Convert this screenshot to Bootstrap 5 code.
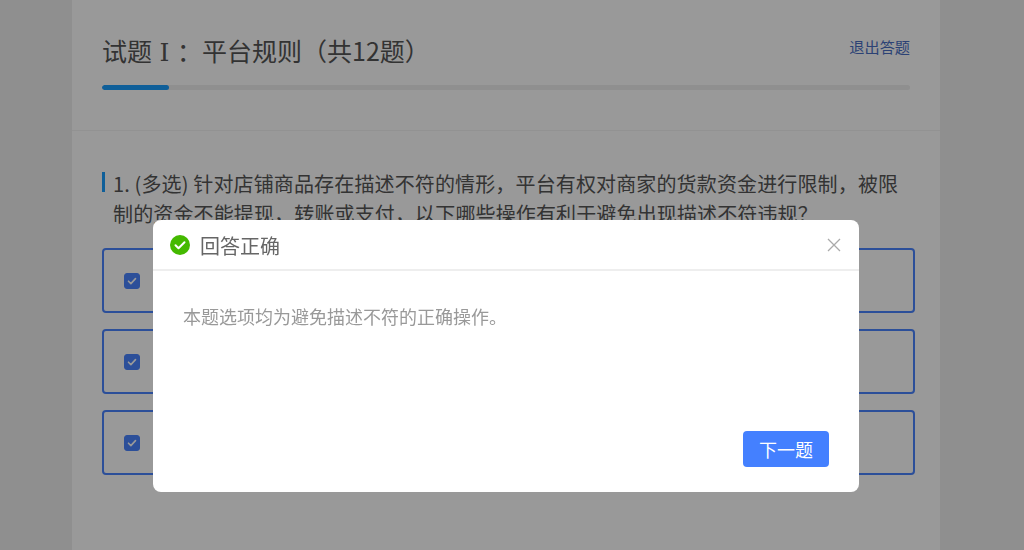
<!DOCTYPE html>
<html lang="zh-CN">
<head>
<meta charset="utf-8">
<title>试题</title>
<link href="https://cdn.jsdelivr.net/npm/bootstrap@5.3.0/dist/css/bootstrap.min.css" rel="stylesheet">
<style>
html, body { height: 100%; overflow: hidden; }
body { background: #eeeeee; font-family: "Noto Sans CJK SC", "Noto Sans", sans-serif; color: #555; }
.exam-panel { width: 868px; min-height: 550px; margin-left: 72px; background: #fff; }
.exam-head { padding: 28px 30px 40px; border-bottom: 1px solid #f3f3f3; height: 131px; }
.exam-top { height: 44px; }
.exam-title { font-size: 25px; line-height: 44px; font-weight: 400; margin: 0; color: #555; }
.exam-num { display: inline-block; width: 25px; line-height: 1; text-align: center; font-family: "Liberation Serif", "DejaVu Serif", serif; }
.exam-quit { font-size: 15.2px; color: #4a6fc4; text-decoration: none; line-height: 36px; }
.exam-progress { height: 5px; background: #eeeeee; border-radius: 3px; margin-top: 13px; }
.exam-progress .progress-bar { background: #1a9fff; border-radius: 3px; }
.exam-body { padding: 40px 25px 0 30px; }
.q-text { font-size: 20px; line-height: 29.5px; letter-spacing: .14px; padding-right: 13px; padding-left: 11px; margin-top: -2px; margin-bottom: 20px; color: #555; position: relative; }
.q-text::before { content: ""; position: absolute; left: 0; top: 3px; width: 3px; height: 20px; background: #1a9fff; }
.opt-box { height: 65px; border: 2px solid #4a84ff; border-radius: 4px; margin-bottom: 16px; padding-left: 20px; }
.opt-box .form-check-input { width: 16px; height: 16px; margin: 0; background-color: #4a84ff; border-color: #4a84ff; border-radius: 3px; background-size: 12px; background-image: url("data:image/svg+xml,%3csvg xmlns='http://www.w3.org/2000/svg' viewBox='0 0 12 12'%3e%3cpath fill='none' stroke='%23fff' stroke-width='1.6' stroke-linecap='round' stroke-linejoin='round' d='M2.5 6.2l2.4 2.4 4.6-5'/%3e%3c/svg%3e"); }
.modal-backdrop.show { opacity: .4; }
.modal-dialog.ans-dialog { max-width: 706px; width: 706px; margin: 220px 0 0 153px; }
.ans-dialog .modal-content { border: 0; border-radius: 8px; height: 272px; font-family: "Noto Sans CJK SC", "Noto Sans", sans-serif; }
.ans-dialog .modal-header { height: 51px; padding: 0 18px 0 17px; border-bottom: 2px solid #eeeeee; border-radius: 8px 8px 0 0; }
.ans-title { font-size: 20px; color: #666; line-height: 1; margin: 2px 0 0 10px; font-weight: 400; }
.ans-close { background: none; border: 0; padding: 0; line-height: 0; }
.ans-dialog .modal-body { padding: 31px 30px 0; font-size: 18px; color: #999; line-height: 28px; flex: 1 1 auto; }
.ans-dialog .modal-footer { border: 0; padding: 0 30px 25px; }
.ans-next { width: 86px; height: 36px; margin: 0; padding: 0; background: #4480ff; border: 0; border-radius: 4px; color: #fff; font-size: 18px; line-height: 36px; }
</style>
</head>
<body>
<div class="exam-panel">
  <div class="exam-head">
    <div class="exam-top d-flex justify-content-between align-items-start">
      <h1 class="exam-title">试题<span class="exam-num">Ⅰ</span>：平台规则（共12题）</h1>
      <a class="exam-quit" href="#">退出答题</a>
    </div>
    <div class="progress exam-progress">
      <div class="progress-bar" role="progressbar" style="width: 8.33%"></div>
    </div>
  </div>
  <div class="exam-body">
    <div class="q-text">1. (多选) 针对店铺商品存在描述不符的情形，平台有权对商家的货款资金进行限制，被限制的资金不能提现，转账或支付，以下哪些操作有利于避免出现描述不符违规？</div>
    <div class="opt-box d-flex align-items-center"><input class="form-check-input" type="checkbox" checked aria-label="选项A"></div>
    <div class="opt-box d-flex align-items-center"><input class="form-check-input" type="checkbox" checked aria-label="选项B"></div>
    <div class="opt-box d-flex align-items-center"><input class="form-check-input" type="checkbox" checked aria-label="选项C"></div>
  </div>
</div>
<div class="modal-backdrop show"></div>
<div class="modal d-block" tabindex="-1">
  <div class="modal-dialog ans-dialog">
    <div class="modal-content">
      <div class="modal-header justify-content-start">
        <svg width="20" height="20" viewBox="0 0 20 20" aria-hidden="true"><circle cx="10" cy="10" r="10" fill="#44b900"/><path d="M5.5 10.3l3 3 6-6" fill="none" stroke="#fff" stroke-width="2" stroke-linecap="round" stroke-linejoin="round"/></svg>
        <h5 class="ans-title">回答正确</h5>
        <button type="button" class="ans-close ms-auto" aria-label="关闭"><svg width="14" height="14" viewBox="0 0 14 14" aria-hidden="true"><path d="M1 1l12 12M13 1L1 13" stroke="#aaa" stroke-width="1.3" fill="none"/></svg></button>
      </div>
      <div class="modal-body">本题选项均为避免描述不符的正确操作。</div>
      <div class="modal-footer">
        <button type="button" class="btn ans-next">下一题</button>
      </div>
    </div>
  </div>
</div>
<script src="https://cdn.jsdelivr.net/npm/bootstrap@5.3.0/dist/js/bootstrap.bundle.min.js"></script>
</body>
</html>
